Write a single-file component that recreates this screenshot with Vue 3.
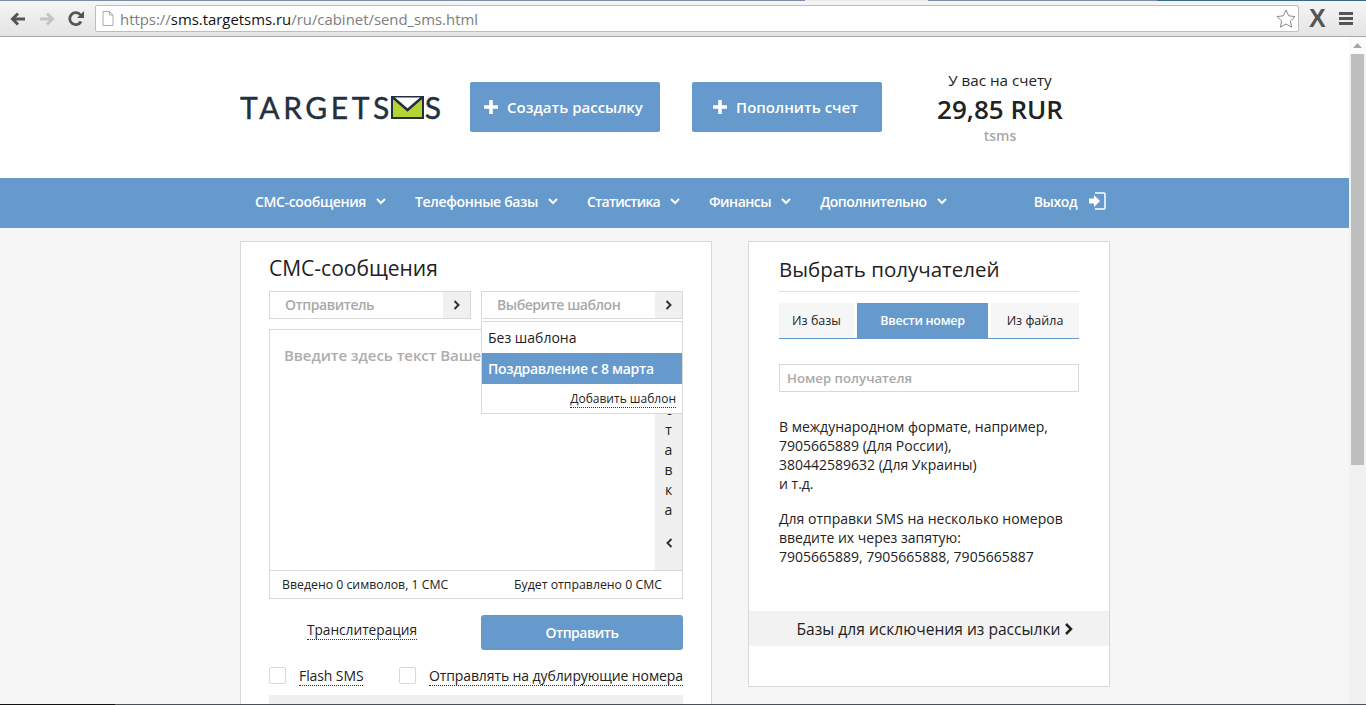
<script setup>
const navItems = ['СМС-сообщения', 'Телефонные базы', 'Статистика', 'Финансы', 'Дополнительно']
const stripLetters = ['с', 'т', 'а', 'в', 'к', 'а']
</script>

<template>
  <div class="window">
    <div class="topline">
      <span class="tl a"></span><span class="tl b"></span><span class="tl c"></span><span class="tl d"></span>
    </div>
    <div class="chrome">
      <svg class="cicon" width="18" height="16" viewBox="0 0 18 16"><path d="M16 8H4M9 2.500 3.500 8 9 13.500" fill="none" stroke="#555" stroke-width="3"/></svg>
      <svg class="cicon" width="18" height="16" viewBox="0 0 18 16"><path d="M2 8h12M9 2.500 14.500 8 9 13.500" fill="none" stroke="#c4c4c4" stroke-width="3"/></svg>
      <svg class="cicon" width="18" height="18" viewBox="0 0 18 18"><path d="M14 11.500A6 6 0 1 1 13.500 5" fill="none" stroke="#555" stroke-width="2.800"/><path d="M10 8h7V1z" fill="#555"/></svg>
      <div class="omnibox">
        <svg width="12" height="15" viewBox="0 0 12 15"><path d="M1 .5h6.500L11 4v10.500H1zM7.500 .5V4H11" fill="#fff" stroke="#aaa"/></svg>
        <span class="url"><span class="u-g">https://</span><span class="u-d">sms.targetsms.ru</span><span class="u-g">/ru/cabinet/send_sms.html</span></span>
        <svg class="star" width="20" height="19" viewBox="0 0 20 19"><path d="m10 1 2.700 5.800 6.300.8-4.600 4.300 1.200 6.200L10 15l-5.600 3.100 1.200-6.200L1 7.600l6.300-.8z" fill="#fff" stroke="#888"/></svg>
      </div>
      <span class="xmark">X</span>
      <svg width="14" height="13" viewBox="0 0 14 13"><path d="M0 0h14v3H0zM0 5h14v3H0zM0 10h14v3H0z" fill="#555"/></svg>
    </div>

    <div class="viewport">
      <div class="page">
        <header class="header">
          <div class="logo"><span>TARGETS</span><svg class="envelope" width="33" height="23" viewBox="0 0 33 23"><rect x="1" y="1" width="31" height="21" fill="#b5d334" stroke="#22303f" stroke-width="2"/><path d="M2 1.500 16.500 14 31 1.500" fill="#fff" stroke="#22303f" stroke-width="2.500"/></svg><span>S</span></div>
          <a class="cta first"><svg class="plus" width="14" height="14" viewBox="0 0 14 14"><path d="M5.200 0h3.600v5.200H14v3.600H8.800V14H5.200V8.800H0V5.200h5.200z" fill="#fff"/></svg>Создать рассылку</a>
          <a class="cta second"><svg class="plus" width="14" height="14" viewBox="0 0 14 14"><path d="M5.200 0h3.600v5.200H14v3.600H8.800V14H5.200V8.800H0V5.200h5.200z" fill="#fff"/></svg>Пополнить счет</a>
          <div class="balance">
            <div class="b-label">У вас на счету</div>
            <div class="b-sum">29,85 RUR</div>
            <div class="b-tsms">tsms</div>
          </div>
        </header>

        <nav class="nav">
          <div class="nav-inner">
            <a v-for="item in navItems" :key="item" class="nav-item">
              {{ item }}
              <svg width="10" height="7" viewBox="0 0 10 7"><path d="m1 1 4 4 4-4" fill="none" stroke="#fff" stroke-width="2"/></svg>
            </a>
            <a class="nav-item exit">
              Выход
              <svg width="17" height="18" viewBox="0 0 17 18"><path d="M6 1h9a1 1 0 0 1 1 1v14a1 1 0 0 1-1 1H6" fill="none" stroke="#fff" stroke-width="1.500"/><path d="M0 6.500h5V3l6 6-6 6v-3.500H0z" fill="#fff"/></svg>
            </a>
          </div>
        </nav>

        <main class="content">
          <section class="card left">
            <h2 class="title l-title">СМС-сообщения</h2>
            <div class="selects">
              <div class="select"><span class="ph">Отправитель</span><span class="arrow"><svg width="8" height="10" viewBox="0 0 8 10"><path d="m1.500 1 4 4-4 4" fill="none" stroke="#333" stroke-width="2"/></svg></span></div>
              <div class="select tpl">
                <span class="ph">Выберите шаблон</span><span class="arrow"><svg width="8" height="10" viewBox="0 0 8 10"><path d="m1.500 1 4 4-4 4" fill="none" stroke="#333" stroke-width="2"/></svg></span>
                <div class="menu">
                  <div class="menu-row">Без шаблона</div>
                  <div class="menu-row active">Поздравление с 8 марта</div>
                  <div class="menu-foot"><span class="dotted">Добавить шаблон</span></div>
                </div>
              </div>
            </div>
            <div class="editor">
              <div class="editor-main">
                <div class="editor-text">Введите здесь текст Вашего</div>
                <div class="strip">
                  <span v-for="(l, i) in stripLetters" :key="i" class="letter">{{ l }}</span>
                  <svg class="strip-chev" width="8" height="10" viewBox="0 0 8 10"><path d="M6.500 1 2.500 5l4 4" fill="none" stroke="#333" stroke-width="2"/></svg>
                </div>
              </div>
              <div class="editor-foot"><span>Введено 0 символов, 1 СМС</span><span>Будет отправлено 0 СМС</span></div>
            </div>
            <div class="actions">
              <div class="translit"><span class="dotted">Транслитерация</span></div>
              <a class="send">Отправить</a>
            </div>
            <div class="checks">
              <label class="check first-check"><i class="box"></i><span class="dotted">Flash SMS</span></label>
              <label class="check"><i class="box"></i><span class="dotted">Отправлять на дублирующие номера</span></label>
            </div>
            <div class="gray-band"></div>
          </section>

          <section class="card right">
            <h2 class="title r-title">Выбрать получателей</h2>
            <div class="tabs">
              <a class="tab t1">Из базы</a>
              <a class="tab t2">Ввести номер</a>
              <a class="tab t3">Из файла</a>
            </div>
            <div class="phone">Номер получателя</div>
            <div class="help">
              <p>В международном формате, например,<br>7905665889 (Для России),<br>380442589632 (Для Украины)<br>и т.д.</p>
              <p>Для отправки SMS на несколько номеров<br>введите их через запятую:<br>7905665889, 7905665888, 7905665887</p>
            </div>
            <div class="exclude">Базы для исключения из рассылки <svg width="9" height="12" viewBox="0 0 9 12"><path d="m2 1 5 5-5 5" fill="none" stroke="#222" stroke-width="2.500"/></svg></div>
          </section>
        </main>
      </div>
      <div class="scrollbar">
        <div class="sb-up"><svg width="9" height="5" viewBox="0 0 9 5"><path d="M4.500 0 9 5H0z" fill="#a8a8a8"/></svg></div>
        <div class="thumb"></div>
      </div>
    </div>
    <div class="taskbar"></div>
  </div>
</template>

<style>
html, body { margin: 0; overflow: hidden; background: #fff; }
</style>

<style scoped>
.window { width: 1366px; height: 705px; display: flex; flex-direction: column; overflow: hidden; font-family: "Open Sans", sans-serif; color: #222; }
.topline { height: 1px; display: flex; flex: none; }
.tl.a { width: 805px; background: #7f8ea8; }
.tl.b { width: 123px; background: #e8e8e8; }
.tl.c { width: 229px; background: #7f8ea8; }
.tl.d { flex: 1; background: #3a6a86; }
.chrome { height: 35px; flex: none; display: flex; align-items: center; background: linear-gradient(#f5f5f5, #e4e4e4); border-bottom: 1px solid #a8a8a8; padding-left: 9px; box-sizing: content-box; }
.cicon { margin-right: 11px; }
.omnibox { width: 1204px; height: 27px; margin-left: -1px; background: #fff; border: 1px solid #bdbdbd; border-radius: 2px; display: flex; align-items: center; padding-left: 6px; box-sizing: border-box; }
.url { margin-left: 6px; font-size: 14.900px; line-height: 24px; flex: 1; }
.u-g { color: #7d7d7d; }
.u-d { color: #111; }
.star { margin-right: 2px; }
.xmark { font: 700 25px "Liberation Sans", sans-serif; color: #555; margin: 0 13px 0 10px; }

.viewport { flex: 1; min-height: 0; display: flex; }
.page { width: 1349px; flex: none; background: #f6f6f6; overflow: hidden; }
.scrollbar { flex: 1; background: #f1f1f1; display: flex; flex-direction: column; align-items: center; }
.sb-up { width: 100%; height: 17px; background: #fbfbfb; display: flex; align-items: center; justify-content: center; }
.thumb { width: 13px; height: 411px; background: #bebebe; }
.taskbar { height: 1px; flex: none; background: linear-gradient(90deg, #111 115px, #4a5258 115px); }

.header { height: 141px; background: #fff; display: flex; align-items: flex-start; padding-left: 240px; box-sizing: border-box; }
.logo { width: 230px; margin-top: 52px; display: flex; align-items: center; font: 400 30px/36px Lato, sans-serif; letter-spacing: 3.600px; color: #22303f; -webkit-text-stroke: .4px #22303f; }
.envelope { margin: 0 1px 0 -2px; flex: none; }
.logo span:last-child { letter-spacing: 0; }
.cta { height: 50px; margin-top: 45px; padding-right: 3px; background: #6699cc; color: #fff; border-radius: 2px; font-size: 15px; font-weight: 600; display: flex; align-items: center; justify-content: center; box-sizing: border-box; }
.cta.first { width: 190px; }
.cta.second { width: 190px; margin-left: 32px; }
.plus { margin-right: 9px; flex: none; }
.balance { width: 236px; text-align: center; margin-top: 32px; }
.b-label { font-size: 15.200px; line-height: 22px; }
.b-sum { font-size: 26px; font-weight: 600; line-height: 36px; }
.b-tsms { font-size: 14px; line-height: 16px; color: #a9a9a9; font-weight: 600; margin-top: 1px; }

.nav { height: 50px; background: #6699cc; }
.nav-inner { height: 100%; padding: 0 0 4px 255px; box-sizing: border-box; display: flex; align-items: center; gap: 29px; }
.nav-item { color: #fff; font-size: 14px; font-weight: 600; display: flex; align-items: center; gap: 10px; letter-spacing: -.35px; white-space: nowrap; }
.nav-item:nth-child(3) { letter-spacing: -.75px; }
.nav-item:nth-child(4), .nav-item:nth-child(5) { letter-spacing: -.5px; }
.nav-item.exit { margin-left: 58px; gap: 12px; }

.content { display: flex; padding: 13px 0 0 240px; gap: 36px; align-items: flex-start; }
.card { background: #fff; border: 1px solid #d8d8d8; box-sizing: border-box; }
.card.left { width: 472px; padding: 0 28px; height: 520px; }
.card.right { width: 362px; height: 446px; }
.title { margin: 0; font-weight: 400; line-height: 27px; color: #222; }
.l-title { padding-top: 13px; font-size: 21px; }
.selects { display: flex; gap: 10px; margin-top: 9px; }
.select { width: 202px; height: 28px; border: 1px solid #d8d8d8; display: flex; justify-content: space-between; position: relative; box-sizing: border-box; }
.ph { color: #a9a9a9; font-size: 14px; font-weight: 600; letter-spacing: -.45px; line-height: 26px; padding-left: 15px; }
.arrow { width: 27px; background: #f0f0f0; display: flex; align-items: center; justify-content: center; }
.menu { position: absolute; z-index: 2; left: -1px; right: -1px; top: 29px; height: 93px; background: #fff; border: 1px solid #d8d8d8; box-sizing: border-box; }
.menu-row { height: 31px; padding-left: 6px; font-size: 14px; line-height: 31px; }
.menu-row.active { background: #6699cc; color: #fff; font-weight: 600; letter-spacing: -.3px; }
.menu-foot { text-align: right; padding: 7px 6px 0 0; font-size: 12px; line-height: 15px; }
.dotted { border-bottom: 1px dotted #333; }
.editor { margin-top: 10px; height: 270px; border: 1px solid #d8d8d8; box-sizing: border-box; display: flex; flex-direction: column; }
.editor-main { flex: 1; display: flex; min-height: 0; }
.editor-text { flex: 1; min-width: 0; padding: 15px 14px; color: #adadad; font-size: 15px; font-weight: 600; letter-spacing: -.05px; line-height: 20px; white-space: nowrap; overflow: hidden; }
.strip { width: 27px; background: #f0f0f0; display: flex; flex-direction: column; align-items: center; padding-top: 70px; box-sizing: border-box; }
.letter { font-size: 14px; line-height: 20px; }
.strip-chev { margin-top: 18px; }
.editor-foot { height: 27px; flex: none; border-top: 1px solid #d8d8d8; display: flex; justify-content: space-between; align-items: center; padding: 0 20px 0 12px; font-size: 12.300px; }
.actions { display: flex; margin-top: 16px; gap: 10px; }
.translit { width: 202px; margin-top: 5px; text-align: center; font-size: 13.700px; line-height: 19px; padding-right: 16px; box-sizing: border-box; }
.send { width: 202px; height: 35px; background: #6699cc; color: #fff; border-radius: 3px; text-align: center; line-height: 35px; font-size: 14px; font-weight: 600; letter-spacing: -.5px; }
.checks { display: flex; margin-top: 17px; height: 17px; font-size: 14px; letter-spacing: -.1px; }
.check { display: flex; align-items: center; white-space: nowrap; }
.first-check { width: 130px; }
.box { width: 17px; height: 17px; border: 1px solid #d8d8d8; border-radius: 2px; box-sizing: border-box; margin-right: 13px; flex: none; }
.gray-band { height: 30px; margin-top: 11px; background: #f0f0f0; }
.right { padding-top: 14px; }
.r-title { margin: 0 30px; padding-bottom: 8px; border-bottom: 1px solid #e0e0e0; font-size: 20.500px; }
.tabs { margin: 11px 30px 0; display: flex; gap: 3px; height: 36px; border-bottom: 1px solid #6699cc; box-sizing: border-box; }
.tab { background: #f6f6f6; font-size: 12.500px; text-align: center; line-height: 35px; }
.t1 { width: 75px; }
.t2 { width: 131px; background: #6699cc; color: #fff; font-weight: 600; letter-spacing: -.3px; }
.t3 { width: 88px; }
.phone { margin: 25px 30px 0; height: 28px; border: 1px solid #d8d8d8; box-sizing: border-box; padding-left: 7px; color: #a9a9a9; font-size: 13.200px; font-weight: 600; line-height: 26px; }
.help { margin: 25px 30px 0; font-size: 14px; line-height: 19px; height: 194px; white-space: nowrap; }
.help p { margin: 0 0 16px; }
.exclude { height: 35px; background: #f2f2f2; display: flex; align-items: center; justify-content: center; gap: 4px; padding-left: 12px; box-sizing: border-box; font-size: 15.600px; }
</style>
